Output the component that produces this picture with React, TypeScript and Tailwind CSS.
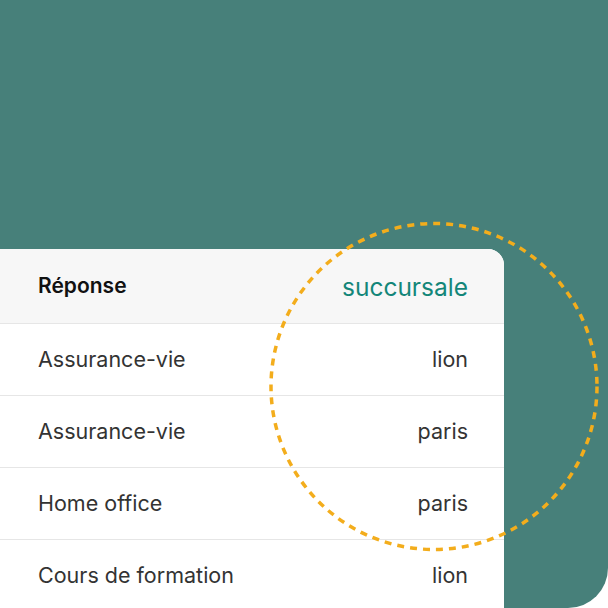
import React from "react";

const rows = [
  ["Assurance-vie", "lion"],
  ["Assurance-vie", "paris"],
  ["Home office", "paris"],
  ["Cours de formation", "lion"],
];

export default function App() {
  return (
    <div className="w-[608px] h-[608px] bg-white">
      <div
        className="relative w-[608px] h-[608px] bg-[#47807a] rounded-br-[40px] overflow-hidden pt-[249px]"
        style={{ fontFamily: "Inter, 'Noto Sans', sans-serif" }}
      >
        <div className="w-[504px] bg-white rounded-tr-[16px] overflow-hidden">
          <div className="h-[75px] bg-[#f7f7f7] border-b border-[#e6e6e6] flex items-center justify-between pl-[38px] pr-[36px]">
            <span className="text-[21px] font-semibold text-[#111]">Réponse</span>
            <span className="text-[24.5px] text-[#138679] pt-[3px]">succursale</span>
          </div>
          {rows.map(([a, b], i) => (
            <div
              key={i}
              className="h-[72px] border-b border-[#e6e6e6] flex items-center justify-between pl-[38px] pr-[36px] text-[21.5px] text-[#333]"
            >
              <span>{a}</span>
              <span>{b}</span>
            </div>
          ))}
        </div>
        <svg className="absolute left-0 top-0 pointer-events-none" width="608" height="608">
          <circle
            cx="434"
            cy="386.5"
            r="163"
            fill="none"
            stroke="#f3ad1c"
            strokeWidth="3.5"
            strokeDasharray="7 6"
          />
        </svg>
      </div>
    </div>
  );
}
